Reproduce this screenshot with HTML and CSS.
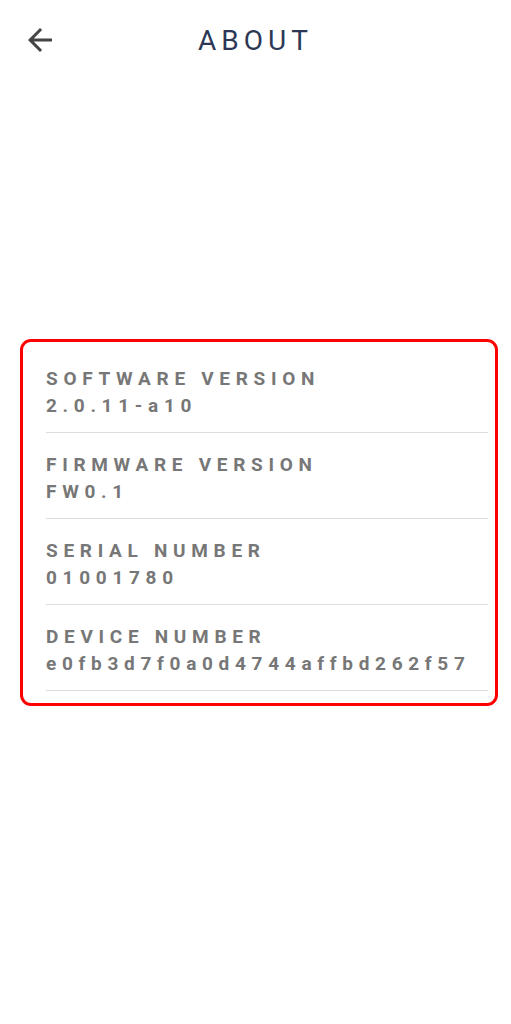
FILE: index.html
```html
<!DOCTYPE html>
<html lang="en">
<head>
  <meta charset="UTF-8">
  <meta name="viewport" content="width=device-width, initial-scale=1.0">
  <title>About</title>
  <link rel="stylesheet" href="styles.css">
</head>
<body>
  <header class="topbar">
    <button class="back" aria-label="Back">
      <svg viewBox="0 0 24 24" width="36" height="36"><path d="M20 11H7.83l5.59-5.59L12 4l-8 8 8 8 1.41-1.41L7.83 13H20v-2z" fill="currentColor"/></svg>
    </button>
    <h1 class="title">ABOUT</h1>
  </header>

  <div class="info-card">
    <div class="info-row">
      <div class="info-label">SOFTWARE VERSION</div>
      <div class="info-value">2.0.11-a10</div>
    </div>
    <div class="info-row">
      <div class="info-label">FIRMWARE VERSION</div>
      <div class="info-value">FW0.1</div>
    </div>
    <div class="info-row">
      <div class="info-label">SERIAL NUMBER</div>
      <div class="info-value">01001780</div>
    </div>
    <div class="info-row">
      <div class="info-label">DEVICE NUMBER</div>
      <div class="info-value">e0fb3d7f0a0d4744affbd262f57</div>
    </div>
  </div>
</body>
</html>
```

FILE: styles.css
```css
body {
  margin: 0;
  padding: 0;
  background: #fff;
  font-family: Roboto, "Noto Sans", sans-serif;
}
.topbar {
  position: relative;
  height: 80px;
  display: flex;
  align-items: center;
  justify-content: center;
}
.back {
  position: absolute;
  left: 22px;
  top: 22px;
  padding: 0;
  border: none;
  background: none;
  color: #444;
  display: flex;
}
.title {
  margin: 0;
  font-size: 28px;
  font-weight: 400;
  letter-spacing: 5px;
  color: #2c3856;
}
.info-card {
  margin: 259px 13px 0 20px;
  border: 3px solid #f00;
  border-radius: 11px;
  padding: 5px 7px 12px 23px;
}
.info-row {
  border-bottom: 1px solid #ddd;
  padding: 18px 0 13px;
}
.info-label,
.info-value {
  font-size: 19px;
  font-weight: 700;
  color: #777;
  letter-spacing: 5.7px;
  line-height: 27px;
  white-space: nowrap;
}
```
